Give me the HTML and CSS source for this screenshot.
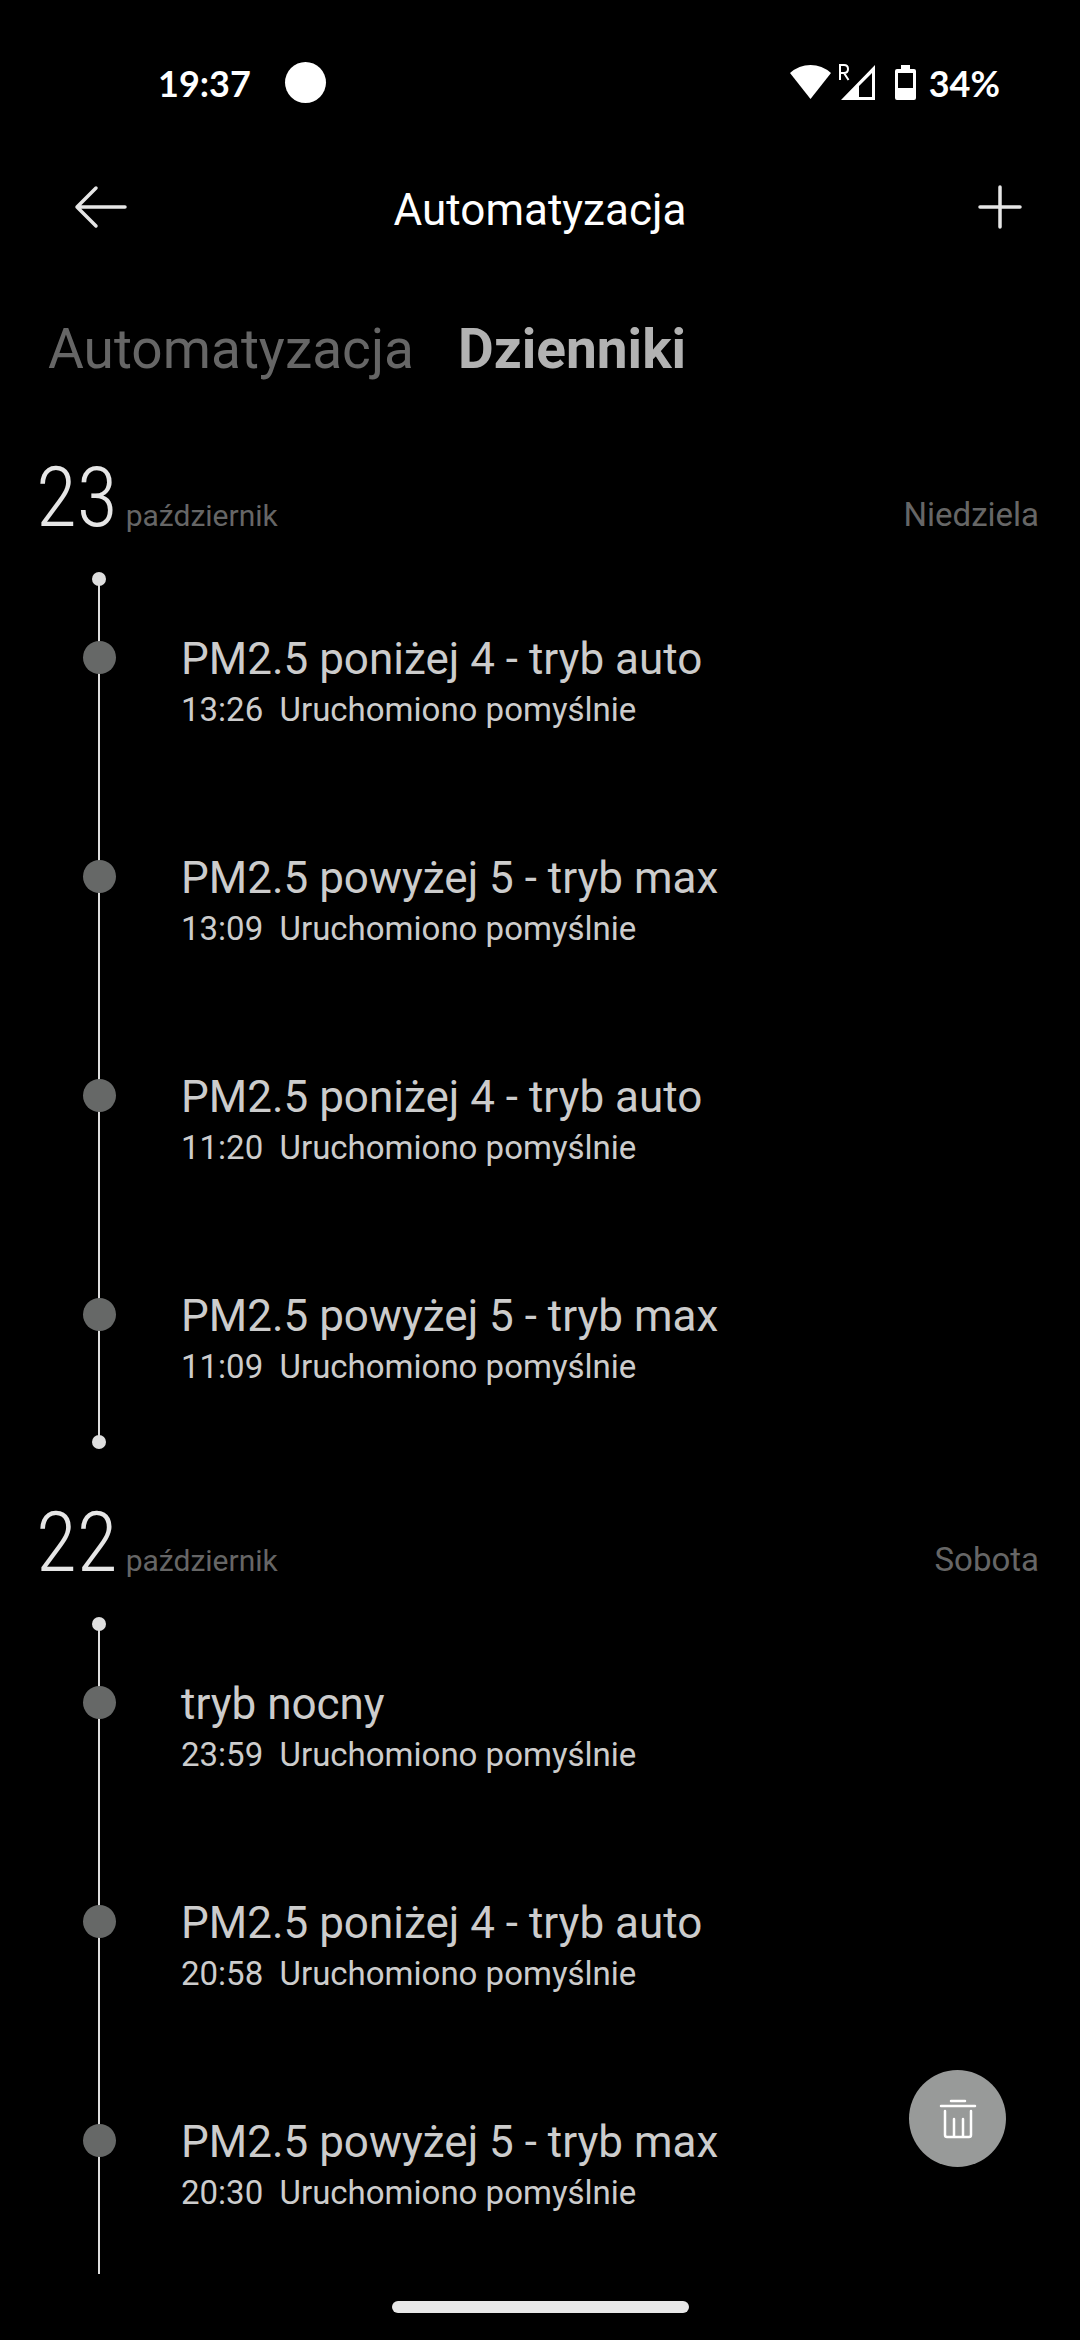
FILE: index.html
```html
<!DOCTYPE html>
<html lang="pl">
    <head>
        <title>Automatyzacja</title>
        <meta charset="UTF-8">
        <meta name="theme-color" content="#000000">
        <meta name="viewport" content="width=device-width, initial-scale=1.0">
        <link rel="stylesheet" href="styles.css">
    </head>
    <body>
        <div class="status-bar">
            <span class="clock">19:37</span>
            <span class="camera"></span>
            <div class="status-icons">
                <svg class="network" width="86" height="40" viewBox="0 0 86 40" fill="#fff">
                    <path d="M0 10Q9 2 20.500 2T41 10L20.500 36Z"/>
                    <path d="M85 2V37H51ZM82 10L69 23V34H82Z" fill-rule="evenodd"/>
                    <path d="M50 17V2H54Q58 2 58 6T54 10H50M54 10L58.500 17" fill="none" stroke="#fff" stroke-width="2"/>
                </svg>
                <svg class="battery" width="22" height="36" viewBox="0 0 22 36">
                    <path d="M6 0H15V4H19Q21 4 21 6V33Q21 35 19 35H2Q0 35 0 33V6Q0 4 2 4H6ZM3 8V23H18V8Z" fill="#fff" fill-rule="evenodd"/>
                </svg>
                <span>34%</span>
            </div>
        </div>

        <header class="app-bar">
            <button class="icon-button" type="button" aria-label="Wstecz">
                <svg width="80" height="56" viewBox="0 0 80 56" fill="none" stroke="#e6e6e6" stroke-width="3.500" stroke-linecap="round" stroke-linejoin="round">
                    <path d="M69 25H21M40 6L21 25L40 44"/>
                </svg>
            </button>
            <h1 class="app-title">Automatyzacja</h1>
            <button class="icon-button" type="button" aria-label="Dodaj">
                <svg width="80" height="56" viewBox="0 0 80 56" fill="none" stroke="#e6e6e6" stroke-width="3.500" stroke-linecap="round">
                    <path d="M36 25H76M56 5V45"/>
                </svg>
            </button>
        </header>

        <nav class="tabs">
            <a class="tab" href="#automatyzacja">Automatyzacja</a>
            <a class="tab active" href="#dzienniki" aria-current="page">Dzienniki</a>
        </nav>

        <main class="journal" id="dzienniki">
            <section class="day">
                <h2 class="day-header">
                    <span class="day-number">23</span>
                    <span class="day-month">październik</span>
                    <span class="day-name">Niedziela</span>
                </h2>
                <ol class="timeline">
                    <li class="entry">
                        <div class="entry-title">PM2.5 poniżej 4 - tryb auto</div>
                        <div class="entry-status"><time>13:26</time>&nbsp; Uruchomiono pomyślnie</div>
                    </li>
                    <li class="entry">
                        <div class="entry-title">PM2.5 powyżej 5 - tryb max</div>
                        <div class="entry-status"><time>13:09</time>&nbsp; Uruchomiono pomyślnie</div>
                    </li>
                    <li class="entry">
                        <div class="entry-title">PM2.5 poniżej 4 - tryb auto</div>
                        <div class="entry-status"><time>11:20</time>&nbsp; Uruchomiono pomyślnie</div>
                    </li>
                    <li class="entry">
                        <div class="entry-title">PM2.5 powyżej 5 - tryb max</div>
                        <div class="entry-status"><time>11:09</time>&nbsp; Uruchomiono pomyślnie</div>
                    </li>
                </ol>
            </section>

            <section class="day">
                <h2 class="day-header">
                    <span class="day-number">22</span>
                    <span class="day-month">październik</span>
                    <span class="day-name">Sobota</span>
                </h2>
                <ol class="timeline open">
                    <li class="entry">
                        <div class="entry-title">tryb nocny</div>
                        <div class="entry-status"><time>23:59</time>&nbsp; Uruchomiono pomyślnie</div>
                    </li>
                    <li class="entry">
                        <div class="entry-title">PM2.5 poniżej 4 - tryb auto</div>
                        <div class="entry-status"><time>20:58</time>&nbsp; Uruchomiono pomyślnie</div>
                    </li>
                    <li class="entry">
                        <div class="entry-title">PM2.5 powyżej 5 - tryb max</div>
                        <div class="entry-status"><time>20:30</time>&nbsp; Uruchomiono pomyślnie</div>
                    </li>
                </ol>
            </section>
        </main>

        <button class="delete-button" type="button" aria-label="Usuń dzienniki">
            <svg width="38" height="42" viewBox="0 0 38 42" fill="none" stroke="#fff" stroke-width="2.500" stroke-linecap="round" stroke-linejoin="round">
                <path d="M12 3H26M2 8H36M6 13V37Q6 39 8 39H30Q32 39 32 37V13M15 21V39M24 21V39"/>
            </svg>
        </button>

        <div class="gesture-bar"></div>
    </body>
</html>
```

FILE: styles.css
```css
* {
    box-sizing: border-box;
}

body {
    display: flex;
    flex-direction: column;
    height: 100vh;
    margin: 0;
    background-color: #000;
    color: #ccc;
    font-family: Roboto, sans-serif;
    font-size: 33px;
}

button {
    display: flex;
    align-items: center;
    justify-content: center;
    padding: 0;
    border: 0;
    background: none;
}

.status-bar {
    display: flex;
    align-items: center;
    flex-shrink: 0;
    height: 166px;
    padding: 0 80px 1px 158px;
    color: #fff;
    font-family: Lato, sans-serif;
    font-size: 36px;
    font-weight: 700;
}

.camera {
    width: 41px;
    height: 41px;
    margin-left: 34px;
    border-radius: 50%;
    background-color: #fff;
}

.status-icons {
    display: flex;
    align-items: center;
    margin-left: auto;
}

.battery {
    margin: 0 12px 0 19px;
}

.app-bar {
    display: flex;
    align-items: center;
    justify-content: space-between;
    flex-shrink: 0;
    height: 88px;
    padding: 0 56px;
}

.icon-button {
    width: 80px;
    height: 56px;
}

.app-title {
    margin: 0;
    color: #fff;
    font-size: 44px;
    font-weight: 400;
    line-height: 56px;
}

.tabs {
    display: flex;
    gap: 44px;
    flex-shrink: 0;
    padding: 63px 48px 16px 48px;
    font-size: 55px;
    line-height: 64px;
}

.tab {
    color: #666;
    text-decoration: none;
}
.tab.active {
    color: #b2b2b2;
    font-weight: 700;
}

.journal {
    flex: 1;
    min-height: 0;
    overflow-y: auto;
    scrollbar-width: none;
}

.day {
    padding-top: 57px;
}

.day-header {
    display: flex;
    align-items: baseline;
    height: 125px;
    margin: 0;
    padding: 0 41px 0 36px;
    color: #666;
    font-weight: 400;
    line-height: 88px;
}

.day-number {
    color: #e6e6e6;
    font-family: 'Roboto Condensed', Roboto, sans-serif;
    font-size: 84px;
    font-weight: 300;
}

.day-month {
    margin-left: 8px;
    font-size: 30px;
}

.day-name {
    margin-left: auto;
    font-size: 33px;
}

.timeline {
    position: relative;
    display: flex;
    flex-direction: column;
    gap: 117px;
    margin: 0 0 0 98px;
    padding: 52px 0;
    border-left: 2px solid #dedede;
    list-style: none;
}
.timeline.open {
    padding-bottom: 117px;
}

/* end caps of the line */
.timeline:before,
.timeline:after {
    content: '';
    position: absolute;
    left: -8px;
    width: 14px;
    height: 14px;
    border-radius: 50%;
    background-color: #dedede;
}
.timeline:before {
    top: -7px;
}
.timeline:after {
    bottom: -7px;
}
.timeline.open:after {
    display: none;
}

.entry {
    position: relative;
    padding-left: 81px;
}
.entry:before {
    content: '';
    position: absolute;
    top: 10px;
    left: -17px;
    width: 33px;
    height: 33px;
    border-radius: 50%;
    background-color: #666867;
}

.entry-title {
    font-size: 44px;
    line-height: 56px;
}

.entry-status {
    line-height: 46px;
}

.delete-button {
    position: fixed;
    right: 74px;
    bottom: 173px;
    width: 97px;
    height: 97px;
    border-radius: 50%;
    background-color: #989a99;
}

.gesture-bar {
    flex-shrink: 0;
    align-self: center;
    width: 297px;
    height: 12px;
    margin: 27px 0;
    border-radius: 6px;
    background-color: #e8e8e8;
}
```
